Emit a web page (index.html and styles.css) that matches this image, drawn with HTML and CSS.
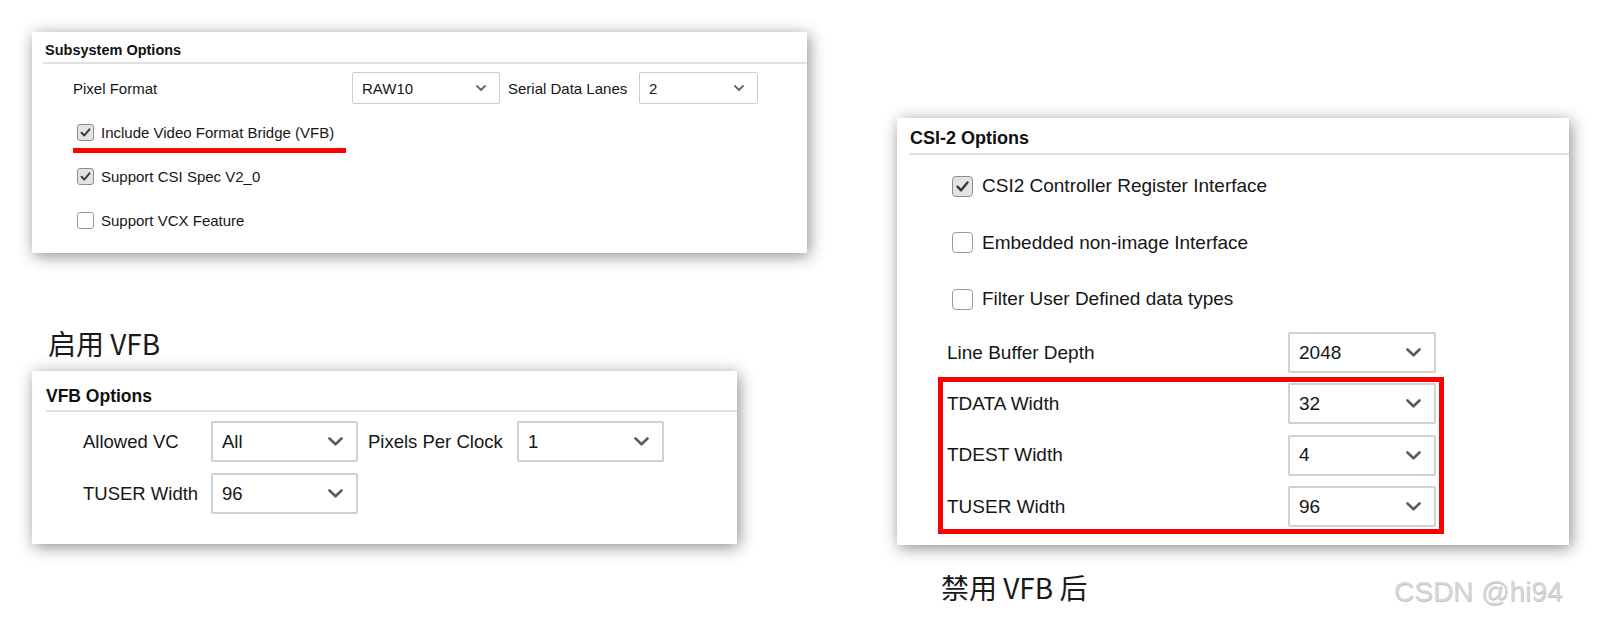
FILE: index.html
```html
<!DOCTYPE html>
<html lang="zh-CN">
<head>
<meta charset="utf-8">
<title>VFB Options</title>
<link rel="stylesheet" href="styles.css">
</head>
<body>
<div class="canvas">
  <div class="col-left">
    <section class="panel p1">
      <div class="ph">Subsystem Options</div>
      <div class="pb">
        <div class="row">
          <span class="lbl w-pf">Pixel Format</span>
          <div class="sel sel-s w148"><span>RAW10</span><svg class="chev-s" viewBox="0 0 10 6"><polyline points="1,1 5,5 9,1"/></svg></div>
          <span class="lbl w-sdl">Serial Data Lanes</span>
          <div class="sel sel-s w119"><span>2</span><svg class="chev-s" viewBox="0 0 10 6"><polyline points="1,1 5,5 9,1"/></svg></div>
        </div>
        <div class="chk chk-s c1"><span class="cb on"><svg viewBox="0 0 16 16"><polyline points="3.8,8.2 6.8,11.2 12.2,4.6"/></svg></span><span>Include Video Format Bridge (VFB)</span></div>
        <div class="mark-line"></div>
        <div class="chk chk-s c2"><span class="cb on"><svg viewBox="0 0 16 16"><polyline points="3.8,8.2 6.8,11.2 12.2,4.6"/></svg></span><span>Support CSI Spec V2_0</span></div>
        <div class="chk chk-s c3"><span class="cb"></span><span>Support VCX Feature</span></div>
      </div>
    </section>

    <div class="caption cap1">启用 VFB</div>

    <section class="panel p2">
      <div class="ph">VFB Options</div>
      <div class="pb">
        <div class="row row-b">
          <span class="lbl w-avc">Allowed VC</span>
          <div class="sel sel-b w147"><span>All</span><svg class="chev-b" viewBox="0 0 15 9"><polyline points="1.5,1.5 7.5,7.3 13.5,1.5"/></svg></div>
          <span class="lbl w-ppc">Pixels Per Clock</span>
          <div class="sel sel-b w147"><span>1</span><svg class="chev-b" viewBox="0 0 15 9"><polyline points="1.5,1.5 7.5,7.3 13.5,1.5"/></svg></div>
        </div>
        <div class="row row-b r2">
          <span class="lbl w-avc">TUSER Width</span>
          <div class="sel sel-b w147"><span>96</span><svg class="chev-b" viewBox="0 0 15 9"><polyline points="1.5,1.5 7.5,7.3 13.5,1.5"/></svg></div>
        </div>
      </div>
    </section>
  </div>

  <div class="col-right">
    <section class="panel p3">
      <div class="ph">CSI-2 Options</div>
      <div class="pb">
        <div class="chk chk-b k1"><span class="cb on"><svg viewBox="0 0 16 16"><polyline points="3.8,8.2 6.8,11.2 12.2,4.6"/></svg></span><span>CSI2 Controller Register Interface</span></div>
        <div class="chk chk-b k2"><span class="cb"></span><span>Embedded non-image Interface</span></div>
        <div class="chk chk-b k2"><span class="cb"></span><span>Filter User Defined data types</span></div>
        <div class="row row-c lbd">
          <span class="lbl w-c">Line Buffer Depth</span>
          <div class="sel sel-c w148"><span>2048</span><svg class="chev-b" viewBox="0 0 15 9"><polyline points="1.5,1.5 7.5,7.3 13.5,1.5"/></svg></div>
        </div>
        <div class="redbox">
          <div class="row row-c">
            <span class="lbl w-c">TDATA Width</span>
            <div class="sel sel-c w148"><span>32</span><svg class="chev-b" viewBox="0 0 15 9"><polyline points="1.5,1.5 7.5,7.3 13.5,1.5"/></svg></div>
          </div>
          <div class="row row-c">
            <span class="lbl w-c">TDEST Width</span>
            <div class="sel sel-c w148"><span>4</span><svg class="chev-b" viewBox="0 0 15 9"><polyline points="1.5,1.5 7.5,7.3 13.5,1.5"/></svg></div>
          </div>
          <div class="row row-c">
            <span class="lbl w-c">TUSER Width</span>
            <div class="sel sel-c w148"><span>96</span><svg class="chev-b" viewBox="0 0 15 9"><polyline points="1.5,1.5 7.5,7.3 13.5,1.5"/></svg></div>
          </div>
        </div>
      </div>
    </section>

    <div class="caption cap2">禁用 VFB 后</div>
  </div>

  <div class="watermark">CSDN @hi94</div>
</div>
</body>
</html>
```

FILE: styles.css
```css
html, body {
  margin: 0;
  padding: 0;
  background: #ffffff;
}

body {
  font-family: "Liberation Sans", Arial, sans-serif;
  color: #161616;
}

.canvas {
  position: relative;
  width: 1601px;
  height: 624px;
  display: flex;
  align-items: flex-start;
  overflow: hidden;
}

.col-left {
  margin-left: 32px;
  width: 775px;
  padding-top: 32px;
  display: flex;
  flex-direction: column;
}

.col-right {
  margin-left: 90px;
  width: 672px;
  padding-top: 118px;
  display: flex;
  flex-direction: column;
}

/* ---------- panels ---------- */
.panel {
  background: #ffffff;
  box-sizing: border-box;
  box-shadow: 2px 3px 15px rgba(0, 0, 0, 0.45);
}

.ph {
  font-weight: bold;
  color: #111;
  border-bottom: 2px solid #e1e1e1;
}

.row {
  display: flex;
  align-items: center;
}

.lbl {
  flex: none;
  white-space: nowrap;
}

.sel {
  flex: none;
  box-sizing: border-box;
  display: flex;
  align-items: center;
  justify-content: space-between;
  background: #fff;
  border-radius: 2px;
}

.sel polyline,
.cb polyline {
  fill: none;
  stroke-linecap: round;
  stroke-linejoin: round;
}

.chev-s {
  width: 10px;
  height: 6px;
}
.chev-s polyline {
  stroke: #666;
  stroke-width: 1.8;
}

.chev-b {
  width: 15px;
  height: 9px;
}
.chev-b polyline {
  stroke: #5c5c5c;
  stroke-width: 2.6;
}

.w148 { width: 148px; }
.w147 { width: 147px; }
.w119 { width: 119px; }

/* checkbox */
.chk {
  display: flex;
  align-items: center;
  white-space: nowrap;
}

.cb {
  flex: none;
  box-sizing: border-box;
  display: flex;
  align-items: center;
  justify-content: center;
  background: #fff;
  border: 1.5px solid #9a9a9a;
  border-radius: 4px;
}

.cb.on {
  background: #e3e3e3;
  border-color: #8e8e8e;
}

.cb svg {
  width: 100%;
  height: 100%;
}

.cb polyline {
  stroke: #3a3a3a;
  stroke-width: 2.1;
}

/* ---------- panel 1 ---------- */
.p1 {
  width: 775px;
  height: 221px;
  font-size: 15px;
}

.p1 .ph {
  margin-left: 11px;
  padding: 9px 0 3px 2px;
  line-height: 18px;
  font-size: 14.5px;
}

.p1 .pb {
  padding-left: 41px;
}

.p1 .row {
  margin-top: 8px;
  height: 32px;
}

.w-pf { width: 279px; }
.w-sdl { width: 131px; margin-left: 8px; }

.sel-s {
  height: 32px;
  border: 1px solid #cdcdcd;
  padding: 0 13px 0 9px;
  font-size: 15px;
}

.chk-s {
  height: 20px;
  font-size: 15px;
}

.chk-s .cb {
  width: 17px;
  height: 17px;
  margin-left: 4px;
  margin-right: 7px;
  border-width: 1.2px;
  border-radius: 3px;
}

.chk-s.c1 { margin-top: 18px; }
.chk-s.c2 { margin-top: 13px; }
.chk-s.c3 { margin-top: 24px; }

.mark-line {
  margin-top: 6px;
  width: 273px;
  height: 5px;
  background: #ff0000;
}

/* ---------- captions ---------- */
.caption {
  font-family: "Noto Sans CJK SC", "Noto Sans", sans-serif;
  font-size: 28px;
  line-height: 36px;
  color: #1a1a1a;
  white-space: nowrap;
}

.cap1 {
  margin-top: 72px;
  margin-left: 16px;
}

.cap2 {
  margin-top: 24px;
  margin-left: 44px;
}

/* ---------- panel 2 ---------- */
.p2 {
  margin-top: 10px;
  width: 705px;
  height: 173px;
  font-size: 18.5px;
}

.p2 .ph {
  margin-left: 14px;
  padding: 14px 0 3px 0;
  line-height: 22px;
  font-size: 17.5px;
}

.p2 .pb {
  padding-left: 51px;
}

.row-b {
  margin-top: 9px;
  height: 41px;
}

.row-b.r2 {
  margin-top: 11px;
}

.w-avc { width: 128px; }
.w-ppc { width: 149px; margin-left: 10px; }

.sel-b,
.sel-c {
  height: 41px;
  border: 2px solid #d0d0d0;
  padding: 0 13px 0 9px;
}

.sel-b { font-size: 18.5px; }

/* ---------- panel 3 ---------- */
.p3 {
  width: 672px;
  height: 427px;
  font-size: 19px;
}

.p3 .ph {
  margin-left: 12px;
  padding: 9px 0 3px 1px;
  line-height: 23px;
  font-size: 18px;
}

.p3 .pb {
  padding-left: 50px;
}

.chk-b {
  height: 22px;
  font-size: 19px;
}

.chk-b .cb {
  width: 21px;
  height: 21px;
  margin-left: 5px;
  margin-right: 9px;
  border-width: 1.8px;
}

.chk-b.k1 { margin-top: 20px; }
.chk-b.k2 { margin-top: 34.5px; }

.row-c {
  height: 41px;
}

.row-c.lbd {
  margin-top: 22px;
}

.w-c { width: 341px; }

.sel-c { font-size: 19px; }

.redbox {
  margin-top: 4px;
  margin-left: -9px;
  width: 506px;
  box-sizing: border-box;
  border: 5px solid #ff0000;
  padding: 1px 3px 2px 4px;
  display: flex;
  flex-direction: column;
  gap: 10.5px;
}

/* ---------- watermark ---------- */
.watermark {
  position: absolute;
  left: 1394px;
  top: 574px;
  font-family: "Liberation Sans", Arial, sans-serif;
  font-size: 28px;
  line-height: 36px;
  color: #d6d6d6;
  text-shadow: 0.5px 0.5px 0 #c2c2c2;
  white-space: nowrap;
}
```
